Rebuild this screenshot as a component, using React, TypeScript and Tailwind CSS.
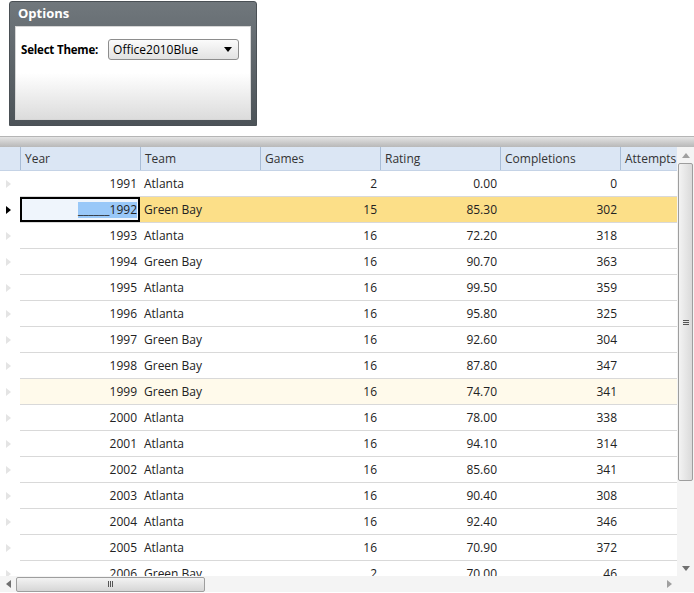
import React from "react"

const rows = [
  ["1991", "Atlanta", "2", "0.00", "0"],
  ["1992", "Green Bay", "15", "85.30", "302"],
  ["1993", "Atlanta", "16", "72.20", "318"],
  ["1994", "Green Bay", "16", "90.70", "363"],
  ["1995", "Atlanta", "16", "99.50", "359"],
  ["1996", "Atlanta", "16", "95.80", "325"],
  ["1997", "Green Bay", "16", "92.60", "304"],
  ["1998", "Green Bay", "16", "87.80", "347"],
  ["1999", "Green Bay", "16", "74.70", "341"],
  ["2000", "Atlanta", "16", "78.00", "338"],
  ["2001", "Atlanta", "16", "94.10", "314"],
  ["2002", "Atlanta", "16", "85.60", "341"],
  ["2003", "Atlanta", "16", "90.40", "308"],
  ["2004", "Atlanta", "16", "92.40", "346"],
  ["2005", "Atlanta", "16", "70.90", "372"],
  ["2006", "Green Bay", "2", "70.00", "46"],
]

const headers = ["Year", "Team", "Games", "Rating", "Completions", "Attempts"]

function Tri({ color, dir = "right" }: { color: string; dir?: "right" | "left" | "up" | "down" }) {
  const pts = {
    right: "0,0 5,4 0,8",
    left: "5,0 0,4 5,8",
    up: "0,5 4,0 8,5",
    down: "0,0 8,0 4,5",
  }[dir]
  const w = dir === "up" || dir === "down" ? 8 : 5
  const h = dir === "up" || dir === "down" ? 5 : 8
  return (
    <svg width={w} height={h} viewBox={`0 0 ${w} ${h}`}>
      <polygon points={pts} fill={color} />
    </svg>
  )
}

function OptionsPanel() {
  return (
    <div className="ml-[9px] mt-[1px] w-[248px] h-[125px] rounded-t-[3px] border border-[#4a5055] bg-gradient-to-b from-[#70777c] to-[#4c5358] px-[5px] pb-[5px]">
      <div className="h-[24px] flex items-center pl-[3px] text-[13px] font-bold text-white">Options</div>
      <div className="h-[94px] border border-[#d6d6d6] bg-gradient-to-b from-white via-white to-[#dcdcdc] px-[5px] pt-[12px]">
        <div className="flex items-center gap-[10px]">
          <span className="text-[11.5px] font-bold text-black tracking-[-0.2px]">Select Theme:</span>
          <div className="w-[131px] h-[21px] rounded-[3px] border border-[#8d8d8d] bg-gradient-to-b from-[#fbfbfb] to-[#e2e2e2] flex items-center justify-between pl-[4px] pr-[6px]">
            <span className="text-[12px] text-black">Office2010Blue</span>
            <Tri color="#000" dir="down" />
          </div>
        </div>
      </div>
    </div>
  )
}

function Grid() {
  return (
    <div className="mt-[10px] w-[694px] h-[456px] flex flex-col overflow-hidden">
      <div className="h-[11px] border-t border-[#b5b5b5] bg-gradient-to-b from-[#e4e4e4] to-[#b8b8b8]" />
      <div className="flex h-[429px]">
        <div className="w-[677px] overflow-hidden">
          <div className="flex h-[24px] bg-[#dbe6f4] border-b border-[#c5d3e6] w-max">
            <div className="w-[20px] shrink-0" />
            {headers.map((h) => (
              <div key={h} className="w-[120px] shrink-0 border-l border-[#a9bdd6] pl-[4px] flex items-center text-[12px] text-[#333]">
                {h}
              </div>
            ))}
          </div>
          {rows.map((r, i) => {
            const sel = i === 1
            const hover = i === 8
            return (
              <div key={r[0]} className={`flex h-[26px] w-max text-[12px] text-[#222] ${sel ? "bg-[#fcdf88]" : hover ? "bg-[#fffaeb]" : "bg-white"}`}>
                <div className="w-[20px] shrink-0 bg-white flex items-center pl-[6px]">
                  <Tri color={sel ? "#000" : "#e4e4e4"} />
                </div>
                <div className="flex border-b border-[#d9d9d9]">
                  {sel ? (
                    <div className="w-[120px] h-[25px] border-2 border-black bg-[#eff5fc] flex items-center justify-end pr-[1px]">
                      <span className="bg-[#99c8f8] text-[#222] leading-[16px]">______1992</span>
                    </div>
                  ) : (
                    <div className="w-[120px] flex items-center justify-end pr-[3px]">{r[0]}</div>
                  )}
                  <div className="w-[120px] flex items-center pl-[4px]">{r[1]}</div>
                  <div className="w-[120px] flex items-center justify-end pr-[3px]">{r[2]}</div>
                  <div className="w-[120px] flex items-center justify-end pr-[3px]">{r[3]}</div>
                  <div className="w-[120px] flex items-center justify-end pr-[3px]">{r[4]}</div>
                  <div className="w-[120px]" />
                </div>
              </div>
            )
          })}
        </div>
        <div className="w-[17px] bg-[#f4f4f4] flex flex-col items-center">
          <div className="h-[16px] flex items-center justify-center">
            <Tri color="#a0a0a0" dir="up" />
          </div>
          <div className="w-[15px] h-[318px] rounded-[2px] border border-[#9e9e9e] bg-gradient-to-r from-[#f3f3f3] to-[#dadada] flex items-center justify-center">
            <div className="flex flex-col gap-[1px]">
              <div className="w-[6px] h-px bg-[#555]" />
              <div className="w-[6px] h-px bg-[#555]" />
              <div className="w-[6px] h-px bg-[#555]" />
            </div>
          </div>
          <div className="flex-1" />
          <div className="h-[16px] flex items-center justify-center">
            <Tri color="#707070" dir="down" />
          </div>
        </div>
      </div>
      <div className="flex h-[16px] bg-[#f4f4f4] items-center">
        <div className="w-[16px] flex items-center justify-center">
          <Tri color="#707070" dir="left" />
        </div>
        <div className="w-[189px] h-[15px] rounded-[2px] border border-[#9e9e9e] bg-gradient-to-b from-[#f3f3f3] to-[#d6d6d6] flex items-center justify-center gap-[1px]">
          <div className="w-px h-[6px] bg-[#555]" />
          <div className="w-px h-[6px] bg-[#555]" />
          <div className="w-px h-[6px] bg-[#555]" />
        </div>
        <div className="flex-1" />
        <div className="w-[16px] flex items-center justify-center">
          <Tri color="#a0a0a0" dir="right" />
        </div>
        <div className="w-[17px]" />
      </div>
    </div>
  )
}

export default function App() {
  return (
    <div className="w-[694px] h-[593px] bg-white overflow-hidden font-['Segoe_UI','Open_Sans',sans-serif]">
      <OptionsPanel />
      <Grid />
    </div>
  )
}
